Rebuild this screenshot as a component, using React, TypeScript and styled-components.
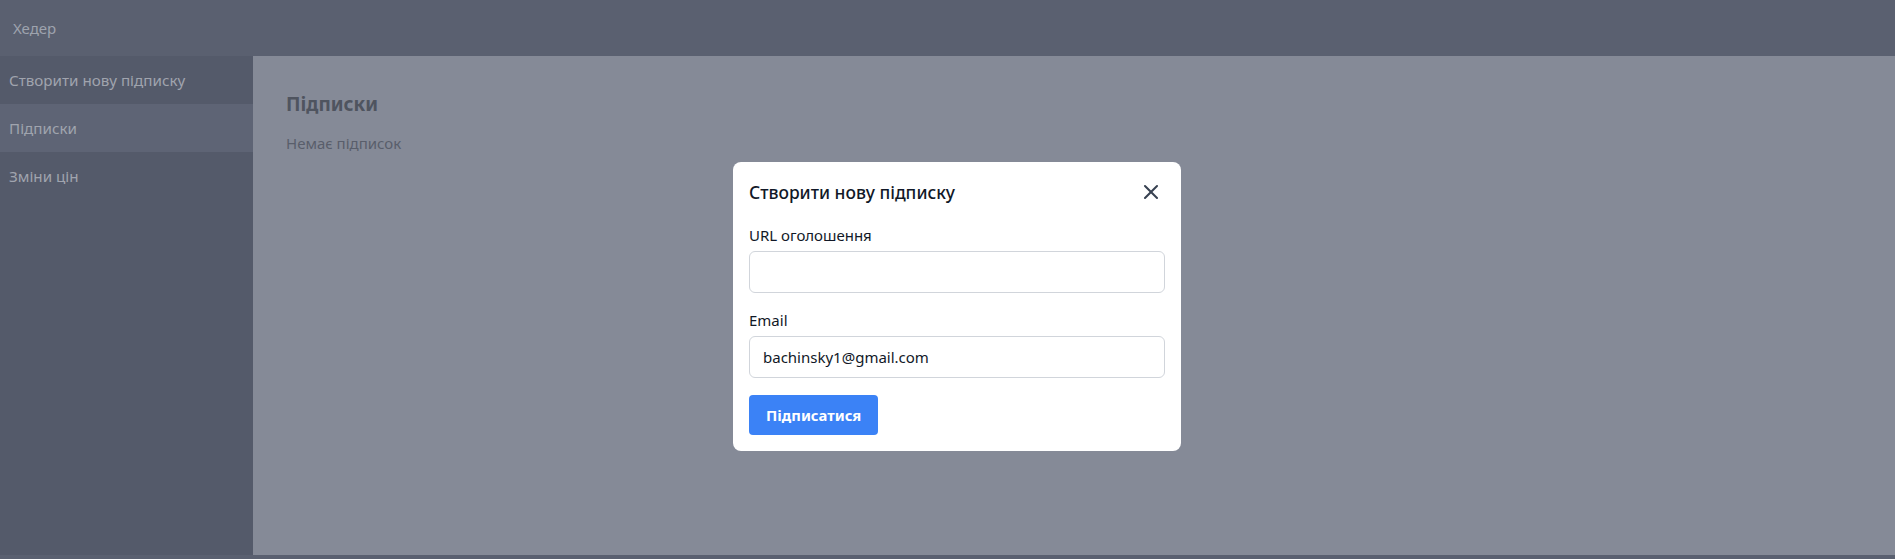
import React from "react";
import styled, { createGlobalStyle } from "styled-components";

const Global = createGlobalStyle`
  html, body { margin: 0; padding: 0; }
  body {
    background: #5a6070;
    font-family: "Noto Sans", "Open Sans", sans-serif;
    width: 1895px;
    height: 559px;
    overflow: hidden;
  }
  * { box-sizing: border-box; }
`;

const Page = styled.div`
  display: flex;
  flex-direction: column;
  height: 555px;
`;

const Header = styled.header`
  height: 56px;
  background: #5a6070;
  color: #9ea3ae;
  font-size: 15px;
  display: flex;
  align-items: center;
  padding-left: 13px;
`;

const Body = styled.div`
  flex: 1;
  display: flex;
`;

const Sidebar = styled.nav`
  width: 253px;
  background: #545a6a;
  display: flex;
  flex-direction: column;
`;

const NavItem = styled.div<{ $active?: boolean }>`
  height: 48px;
  display: flex;
  align-items: center;
  padding-left: 9px;
  font-size: 15.2px;
  color: #a0a4ae;
  background: ${(p) => (p.$active ? "#5e6475" : "transparent")};
`;

const Main = styled.main`
  flex: 1;
  background: #858a97;
  padding: 33px 33px;
`;

const Heading = styled.h2`
  margin: 0 0 14px;
  font-size: 19px;
  font-weight: 700;
  color: #4f545f;
  line-height: 30px;
`;

const Empty = styled.p`
  margin: 0;
  font-size: 15px;
  color: #595e6b;
`;

const Overlay = styled.div`
  position: fixed;
  inset: 0;
`;

const Modal = styled.div`
  position: absolute;
  left: 733px;
  top: 162px;
  width: 448px;
  background: #ffffff;
  border-radius: 8px;
  padding: 16px;
  display: flex;
  flex-direction: column;
`;

const ModalHead = styled.div`
  display: flex;
  align-items: center;
  justify-content: space-between;
  height: 28px;
  margin-bottom: 19px;
`;

const Title = styled.h3`
  margin: 0;
  font-size: 17.4px;
  font-weight: 500;
  color: #111827;
`;

const CloseBtn = styled.button`
  border: none;
  background: none;
  padding: 0;
  width: 24px;
  height: 24px;
  color: #374151;
  display: flex;
  align-items: center;
  justify-content: center;
  margin-right: 2px;
  cursor: pointer;
`;

const Field = styled.div`
  display: flex;
  flex-direction: column;
  margin-bottom: 17px;
`;

const Label = styled.label`
  font-size: 15px;
  color: #111827;
  line-height: 21px;
  margin-bottom: 5px;
`;

const Input = styled.input`
  height: 42px;
  border: 1px solid #d1d5db;
  border-radius: 6px;
  padding: 0 13px;
  font-family: inherit;
  font-size: 15px;
  color: #111827;
  outline: none;
`;

const Submit = styled.button`
  align-self: flex-start;
  height: 40px;
  padding: 0 17px;
  border: none;
  border-radius: 4px;
  background: #3b82f6;
  color: #ffffff;
  font-family: inherit;
  font-weight: 700;
  font-size: 14.8px;
`;

export default function App() {
  return (
    <>
      <Global />
      <Page>
        <Header>Хедер</Header>
        <Body>
          <Sidebar>
            <NavItem>Створити нову підписку</NavItem>
            <NavItem $active>Підписки</NavItem>
            <NavItem>Зміни цін</NavItem>
          </Sidebar>
          <Main>
            <Heading>Підписки</Heading>
            <Empty>Немає підписок</Empty>
          </Main>
        </Body>
      </Page>
      <Overlay>
        <Modal>
          <ModalHead>
            <Title>Створити нову підписку</Title>
            <CloseBtn aria-label="close">
              <svg width="24" height="24" viewBox="0 0 24 24" fill="none" stroke="currentColor" strokeWidth="2" strokeLinecap="round">
                <path d="M6 6l12 12M18 6L6 18" />
              </svg>
            </CloseBtn>
          </ModalHead>
          <Field>
            <Label>URL оголошення</Label>
            <Input />
          </Field>
          <Field>
            <Label>Email</Label>
            <Input defaultValue="bachinsky1@gmail.com" />
          </Field>
          <Submit>Підписатися</Submit>
        </Modal>
      </Overlay>
    </>
  );
}
